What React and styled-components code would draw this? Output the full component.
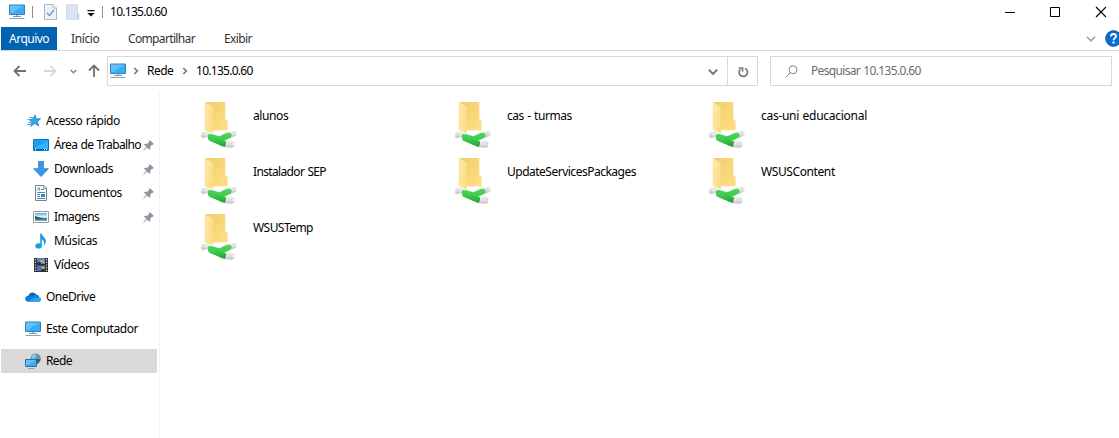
import React from 'react';
import styled, { createGlobalStyle } from 'styled-components';

const Global = createGlobalStyle`
  * { box-sizing: border-box; }
  body {
    margin: 0;
    background: #fff;
    overflow: hidden;
    color: #000;
    font: 12px/16px "Noto Sans", "Open Sans", sans-serif;
  }
  svg { display: block; flex: none; }
`;

const Window = styled.div`
  width: 1119px;
  height: 438px;
  display: flex;
  flex-direction: column;
  background: #fff;
  overflow: hidden;
`;

const Text = styled.span`
  min-width: 0;
  white-space: pre;
  letter-spacing: ${(p) => p.$ls || 0}px;
  word-spacing: 0.7px;
`;

const TitleBar = styled.header`
  height: 27px;
  flex: none;
  display: flex;
  align-items: center;
  padding: 0 12px 4px 9px;
`;

const Rule = styled.span`
  width: 1px;
  height: 12px;
  background: #8c8c8c;
  margin: 0 ${(p) => p.$right}px 0 ${(p) => p.$left}px;
`;

const QuickFolder = styled.svg`
  margin-left: 9px;
`;

const QuickMenu = styled.svg`
  margin: 4px 0 0 7px;
`;

const Controls = styled.div`
  margin-left: auto;
  display: flex;
  align-items: center;
  gap: 35px;
`;

const Ribbon = styled.nav`
  height: 24px;
  flex: none;
  display: flex;
  padding-left: 1px;
  border-bottom: 1px solid #dadbdc;
`;

const Tab = styled.div`
  width: ${(p) => p.$w}px;
  height: 23px;
  padding: 4px 0 0 ${(p) => p.$pad}px;
  color: ${(p) => (p.$active ? '#fff' : '#333')};
  background: ${(p) => (p.$active ? '#0063b1' : 'transparent')};
`;

const RibbonTools = styled.div`
  margin-left: auto;
  margin-right: -3px;
  display: flex;
  align-items: center;
  gap: 9px;
`;

const NavBar = styled.div`
  height: 42px;
  flex: none;
  display: flex;
  padding: 5px 7px 0 13px;
`;

const Arrows = styled.div`
  width: 94px;
  height: 30px;
  display: flex;
  align-items: center;
`;

const ArrowSvg = styled.svg`
  margin-right: ${(p) => p.$gap || 0}px;
  margin-left: ${(p) => p.$before || 0}px;
  transform: rotate(${(p) => p.$turn || 0}deg);
`;

const Field = styled.div`
  width: ${(p) => p.$w}px;
  height: 30px;
  display: flex;
  align-items: center;
  border: 1px solid #d9d9d9;
  margin-right: ${(p) => p.$gap || 0}px;
  padding-left: ${(p) => p.$pad}px;
  color: ${(p) => p.$color || '#000'};
`;

const FieldButton = styled.div`
  width: ${(p) => p.$w}px;
  height: 28px;
  display: flex;
  align-items: center;
  justify-content: center;
  padding-top: 1px;
  border-left: ${(p) => (p.$line ? '1px solid #d9d9d9' : '0')};
  margin-left: ${(p) => (p.$push ? 'auto' : '0')};
`;

const Crumb = styled.div`
  width: ${(p) => p.$w}px;
  flex: none;
  display: flex;
  align-items: center;
  gap: 7px;
  padding-left: ${(p) => p.$pad}px;
`;

const SearchIcon = styled.svg`
  margin-right: 13px;
`;

const Body = styled.main`
  flex: 1;
  display: flex;
  min-height: 0;
`;

const Sidebar = styled.aside`
  width: 160px;
  flex: none;
  border-right: 1px solid #f2f2f2;
  padding: 16px 2px 0 1px;
`;

const SideItem = styled.div`
  height: 24px;
  display: flex;
  align-items: center;
  gap: 5px;
  padding: 0 3px 0 ${(p) => (p.$nested ? 32 : 24)}px;
  margin-top: ${(p) => (p.$group ? 8 : 0)}px;
  background: ${(p) => (p.$selected ? '#d9d9d9' : 'transparent')};
`;

const Pin = styled.span`
  margin-left: auto;
`;

const Files = styled.section`
  flex: 1;
  padding: 2px 0 0 35px;
  display: grid;
  grid-template-columns: repeat(3, 254px);
  grid-auto-rows: 56px;
  align-content: start;
`;

const File = styled.div`
  display: flex;
  gap: 8px;
  ${Text} { padding-top: 13px; }
`;

const DefsSvg = styled.svg`
  position: absolute;
`;

const Gradients = () => (
  <DefsSvg width="0" height="0">
    <defs>
      <linearGradient id="screen" x1="0" y1="0" x2="1" y2="1">
        <stop offset="0" stopColor="#6fc6fb" />
        <stop offset=".5" stopColor="#5bbcfa" />
        <stop offset=".52" stopColor="#38adfa" />
        <stop offset="1" stopColor="#35aefb" />
      </linearGradient>
      <linearGradient id="flap" x1="0" y1="0" x2="1" y2="1">
        <stop offset="0" stopColor="#ffe9a8" />
        <stop offset="1" stopColor="#fbdc83" />
      </linearGradient>
      <linearGradient id="back" x1="0" y1="0" x2="1" y2="1">
        <stop offset="0" stopColor="#f0cd6b" />
        <stop offset="1" stopColor="#ffdf87" />
      </linearGradient>
      <linearGradient id="pipe" x1="0" y1="0" x2="0" y2="1">
        <stop offset="0" stopColor="#55d560" />
        <stop offset=".5" stopColor="#3ecb4c" />
        <stop offset="1" stopColor="#229a35" />
      </linearGradient>
      <linearGradient id="plug" x1="0" y1="0" x2="0" y2="1">
        <stop offset="0" stopColor="#ededed" />
        <stop offset=".5" stopColor="#e6e7e7" />
        <stop offset="1" stopColor="#bcbfc0" />
      </linearGradient>
      <linearGradient id="photo" x1="0" y1="0" x2="0" y2="1">
        <stop offset="0" stopColor="#5fa5ec" />
        <stop offset=".45" stopColor="#e1f1fb" />
        <stop offset="1" stopColor="#5c98c8" />
      </linearGradient>
    </defs>
  </DefsSvg>
);

const Monitor = () => (
  <svg width="16" height="16" viewBox="0 0 16 16">
    <path d="M.5 1h15v9.5H.5z" fill="url(#screen)" stroke="#3b7ea8" />
    <path d="M7 11h2v1H7z" fill="#a8bfce" />
    <path d="M4 12h8v1H4z" fill="#6f9bb8" />
    <path d="M1 14h14l1 1H0z" fill="#8aa5b8" />
  </svg>
);

const FolderIcon = () => (
  <svg width="50" height="56" viewBox="0 0 150 168">
    <path d="M31 21H91V72L98 79V106H50L31 98Z" fill="url(#back)" />
    <path d="M29 21L51 34Q53 36 53 39V115L29 104Z" fill="url(#flap)" />
    <path d="M52 37V114" stroke="#f8d67d" strokeWidth="1.5" />
    <path d="M20 112L40 107L45 123L23 130Q16 128 17 120Z" fill="url(#plug)" />
    <path d="M103 111L121 107Q127 108 126 116L122 123L107 128Z" fill="url(#plug)" />
    <path d="M90 139L114 138Q120 143 118 153L112 158L88 157Z" fill="url(#plug)" />
    <path d="M103 141Q100 148 103 156M26 112Q23 121 28 129M117 108Q114 116 118 123" stroke="#bfc1c2" fill="none" strokeWidth="1.5" />
    <ellipse cx="113" cy="147" rx="3.5" ry="5.5" fill="#f4f4f4" stroke="#b9bcbd" strokeWidth="1.5" />
    <path d="M39 120Q43 115 50 117L73 124L94 114Q105 110 110 118Q111 127 103 130L87 137L93 139Q95 147 89 156L80 153L43 137Q36 130 39 120Z" fill="url(#pipe)" />
    <path d="M66 133L90 143" stroke="#37bd48" strokeWidth="4" />
  </svg>
);

const Chevron = ({ w = 8, down = true, color = '#777', stroke = 1.6 }) => (
  <svg width={w} height={w} viewBox="0 0 8 8" fill="none" stroke={color} strokeWidth={stroke}>
    <path d={down ? 'M.7 2.2L4 5.5L7.3 2.2' : 'M2.3 1L5.3 4L2.3 7'} />
  </svg>
);

const Arrow = ({ color, turn, gap, before }) => (
  <ArrowSvg width="14" height="14" viewBox="0 0 14 14" fill="none" stroke={color} strokeWidth="1.8"
    $turn={turn} $gap={gap} $before={before}>
    <path d="M1.5 7H13M6.5 2L1.5 7L6.5 12" />
  </ArrowSvg>
);

const SIDE_ART = {
  star: (
    <>
      <path d="M10 2L11.2 6L15.5 5.7L12.3 8.6L13.6 12.8L9.7 10.4L5.9 13.3L7 9L4 6.6L8.1 6.1Z" fill="#36a9ee" stroke="#1d87ce" strokeWidth=".9" />
      <path d="M4.5 4.5H8M2.5 6.5H5M3.5 9.5H6.5M2 11.5H6" stroke="#4ba9df" />
    </>
  ),
  desktop: (
    <>
      <path d="M.5 2.5h15v11H.5z" fill="#19a0f7" stroke="#0877c5" />
      <path d="M1 11L15 4V12H1z" fill="#35b2ff" />
      <path d="M1 12.5h14" stroke="#075a98" />
      <path d="M2 12.5h1M11 12.5h1M13 12.5h1" stroke="#fff" />
    </>
  ),
  down: <path d="M5.5.5h5v7.2h4.8L8 15.6L.7 7.7h4.8z" fill="#3997e6" stroke="#2f7dc9" strokeWidth=".8" />,
  document: (
    <>
      <path d="M2.5.5H11L13.5 3V15.5H2.5Z" fill="#fff" stroke="#808080" />
      <path d="M10.5 1V3.5H13" fill="none" stroke="#999" />
      <path d="M4 5.5L6 2.5L6.5 5.5M8 4.5h3M4 7.5h8M4 9.5h3M4 11.5h3M4 13.5h8" fill="none" stroke="#438fbe" />
      <path d="M8 9h4v3H8z" fill="#3986b8" />
    </>
  ),
  image: (
    <>
      <path d="M.5 2.5h15v11H.5z" fill="#fff" stroke="#999" />
      <path d="M2 4h12v8H2z" fill="url(#photo)" />
      <path d="M2 7L5 8L9 9L14 9.5V10.5H2z" fill="#285a58" />
    </>
  ),
  music: (
    <>
      <path d="M7.2.5H8.6C9 3.5 13.6 5 12.9 9.5L11 12.4C11.7 8.9 10.2 7.2 8.8 6.6V12.8H7.2Z" fill="#149ae9" />
      <ellipse cx="5.6" cy="12.9" rx="3.2" ry="2.6" fill="#149ae9" />
    </>
  ),
  video: (
    <>
      <path d="M1 1h14v14H1z" fill="#303030" />
      <path d="M4 1h8v6H4z" fill="#5681d7" />
      <path d="M4 8.5h8V14H4z" fill="#4875cf" />
      <path d="M2.5 2V15M13.5 2V15" stroke="#ddd" strokeWidth="1.2" strokeDasharray="1.2 1.5" />
      <path d="M7 3h4v3H7z" fill="#d7a73f" />
      <path d="M4 5h4v2H4zM8 12h4v2H8z" fill="#263b31" />
      <path d="M8.5 9.5h3v2.5h-3z" fill="#c5a750" />
      <path d="M7 5h2v1H7z" fill="#cf473e" />
    </>
  ),
  cloud: (
    <>
      <path d="M3.5 7C4 3.5 9 1.8 11.4 6L8.5 10L2 11Z" fill="#0a63b7" />
      <path d="M7.6 7.2C10 4.6 14.3 5.3 14.3 8.5L12.5 11.5L6.5 9Z" fill="#1683d7" />
      <path d="M3.6 6.4C5 6 6 6.3 7.2 7L11 9.3L4 13C-1.3 13-.8 6.8 3.6 6.4Z" fill="#127bd1" />
      <path d="M2 12.4L10.5 8.5L14.5 8.3C17 9 16.5 13 13.5 13H4C3 13 2.5 12.8 2 12.4Z" fill="#2aa7eb" />
    </>
  ),
  network: (
    <>
      <circle cx="10.6" cy="5.8" r="5.2" fill="#4b8fa9" />
      <path d="M7.4 2.5L10 .9L12 3L9 6L6 5Z" fill="#93c9d9" />
      <path d="M12 1L15.5 5L13 8L11 5Z" fill="#5f9db5" />
      <path d="M12 6L15.5 6.5L13 10.5H11Z" fill="#245d79" />
      <path d="M.5 6.5h11v7H.5z" fill="url(#screen)" stroke="#2d7099" />
      <path d="M3 15.5h6" stroke="#8aa0b3" />
    </>
  ),
};

const SideIcon = ({ name }) =>
  name === 'monitor' ? <Monitor /> : <svg width="16" height="16" viewBox="0 0 16 16">{SIDE_ART[name]}</svg>;

const PinIcon = () => (
  <svg width="11" height="11" viewBox="0 0 11 11">
    <path d="M6.8 0L11 4L9.7 5L9 4.8L7.3 6.8L7.2 9L6.3 9.8L4 7.6L.5 10.7L.2 10.3L3.2 6.8L1 4.6L2 3.7H4.3L6.2 2L6 1Z" fill="#8996a1" />
  </svg>
);

const PLACES = [
  { label: 'Acesso rápido', icon: 'star', ls: -0.42 },
  { label: 'Área de Trabalho', icon: 'desktop', nested: true, pin: true, ls: -0.64 },
  { label: 'Downloads', icon: 'down', nested: true, pin: true, ls: -0.42 },
  { label: 'Documentos', icon: 'document', nested: true, pin: true, ls: -0.4 },
  { label: 'Imagens', icon: 'image', nested: true, pin: true, ls: -0.6 },
  { label: 'Músicas', icon: 'music', nested: true, ls: -0.3 },
  { label: 'Vídeos', icon: 'video', nested: true, ls: -0.4 },
  { label: 'OneDrive', icon: 'cloud', group: true, ls: -0.5 },
  { label: 'Este Computador', icon: 'monitor', group: true, ls: -0.46 },
  { label: 'Rede', icon: 'network', group: true, selected: true, ls: -0.6 },
];

const SHARES = [
  ['alunos', -0.4],
  ['cas - turmas', -0.45],
  ['cas-uni educacional', -0.28],
  ['Instalador SEP', -0.65],
  ['UpdateServicesPackages', -0.5],
  ['WSUSContent', -0.4],
  ['WSUSTemp', -0.55],
];

export default function App() {
  return (
    <Window>
      <Global />
      <Gradients />
      <TitleBar>
        <Monitor />
        <Rule $left={7} $right={11} />
        <svg width="13" height="16" viewBox="0 0 13 16">
          <path d="M.5.5H9L12.5 4V15.5H.5Z" fill="#edf3fc" stroke="#a9b8cf" />
          <path d="M9 .5V4H12.5" fill="#fff" stroke="#a9b8cf" />
          <path d="M3 9L5.4 11.5L10 6" fill="none" stroke="#8197b9" strokeWidth="1.5" />
        </svg>
        <QuickFolder width="14" height="16" viewBox="0 0 14 16">
          <path d="M.5.5H11.5V9L13 10V15.5H.5Z" fill="#dce5f4" stroke="#cfdbed" />
          <path d="M11.5 9V15" stroke="#b8c8df" />
        </QuickFolder>
        <QuickMenu width="8" height="7" viewBox="0 0 8 7">
          <path d="M.5 0H7.5V1.2H.5ZM.3 3H7.7L4 6.6Z" fill="#111" />
        </QuickMenu>
        <Rule $left={7} $right={7} />
        <Text $ls={-0.73}>10.135.0.60</Text>
        <Controls>
          <svg width="10" height="10" viewBox="0 0 10 10"><path d="M0 5.5H10" stroke="#000" /></svg>
          <svg width="10" height="10" viewBox="0 0 10 10"><path d="M.5.5H9.5V9.5H.5Z" stroke="#000" fill="none" /></svg>
          <svg width="12" height="12" viewBox="0 0 12 12"><path d="M1 1L11 11M11 1L1 11" stroke="#000" strokeWidth="1.1" /></svg>
        </Controls>
      </TitleBar>
      <Ribbon>
        <Tab $active $w={56} $pad={8}><Text $ls={-0.5}>Arquivo</Text></Tab>
        <Tab $w={57} $pad={14}><Text $ls={-0.4}>Início</Text></Tab>
        <Tab $w={96} $pad={14}><Text $ls={-0.65}>Compartilhar</Text></Tab>
        <Tab $w={60} $pad={14}><Text $ls={-0.6}>Exibir</Text></Tab>
        <RibbonTools>
          <Chevron w={10} color="#a0a0a0" stroke={1.2} />
          <svg width="17" height="17" viewBox="0 0 17 17">
            <circle cx="8.5" cy="8.5" r="7.8" fill="#0870d0" stroke="#075499" />
            <path d="M6 6.4C6 3.2 11 3.3 11 6.2C11 8.1 8.5 8.2 8.5 10.3" fill="none" stroke="#fff" strokeWidth="1.8" />
            <path d="M7.5 11.5h2v2h-2z" fill="#fff" />
          </svg>
        </RibbonTools>
      </Ribbon>
      <NavBar>
        <Arrows>
          <Arrow color="#707070" gap={16} />
          <Arrow color="#d7d7d7" turn={180} gap={13} />
          <Chevron w={7} color="#888" />
          <Arrow color="#707070" turn={90} before={10} />
        </Arrows>
        <Field $w={651} $gap={12} $pad={2}>
          <Monitor />
          <Crumb $w={55} $pad={6}>
            <Chevron down={false} />
            <Text $ls={-0.5}>Rede</Text>
          </Crumb>
          <Crumb $w={80} $pad={0}>
            <Chevron down={false} />
            <Text $ls={-0.73}>10.135.0.60</Text>
          </Crumb>
          <FieldButton $push $w={28}><Chevron w={10} /></FieldButton>
          <FieldButton $line $w={30}>
            <svg width="12" height="12" viewBox="0 0 12 12" fill="none" stroke="#777" strokeWidth="1.7">
              <path d="M8.2 2.5A4.2 4.2 0 1 1 3.3 3.3" />
              <path d="M1.6 1.9H5.6V5.8" strokeWidth="1.5" />
            </svg>
          </FieldButton>
        </Field>
        <Field $w={342} $pad={14} $color="#6d6d6d">
          <SearchIcon width="13" height="13" viewBox="0 0 13 13" fill="none" stroke="#858585">
            <circle cx="8" cy="4.8" r="4" /><path d="M5.2 7.8L.5 12.5" />
          </SearchIcon>
          <Text $ls={-0.66}>Pesquisar 10.135.0.60</Text>
        </Field>
      </NavBar>
      <Body>
        <Sidebar>
          {PLACES.map((p) => (
            <SideItem key={p.label} $nested={p.nested} $group={p.group} $selected={p.selected}>
              <SideIcon name={p.icon} />
              <Text $ls={p.ls}>{p.label}</Text>
              {p.pin && <Pin><PinIcon /></Pin>}
            </SideItem>
          ))}
        </Sidebar>
        <Files>
          {SHARES.map(([name, ls]) => (
            <File key={name}><FolderIcon /><Text $ls={ls}>{name}</Text></File>
          ))}
        </Files>
      </Body>
    </Window>
  );
}
